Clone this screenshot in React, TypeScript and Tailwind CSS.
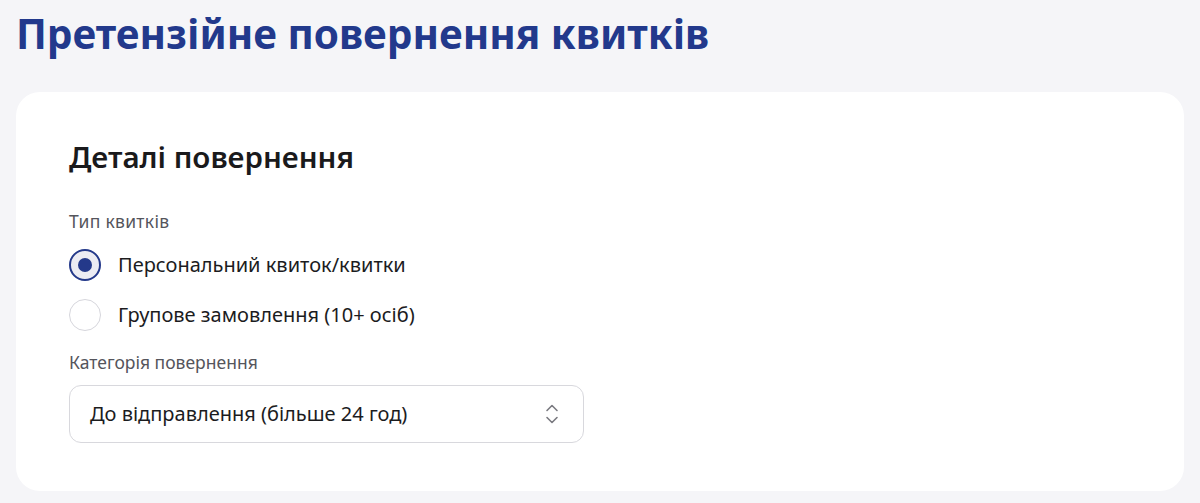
import React, { useState } from "react";

const font = { fontFamily: '"Noto Sans", "Open Sans", sans-serif' };

interface RadioOptionProps {
    label: string;
    checked: boolean;
    onSelect: () => void;
}

function RadioOption({ label, checked, onSelect }: RadioOptionProps) {
    return (
        <label className="flex items-center gap-[17px] cursor-pointer" onClick={onSelect}>
            {checked ? (
                <span className="flex h-8 w-8 items-center justify-center rounded-full border-2 border-[#24398a] bg-[#ececf3]">
                    <span className="h-[14px] w-[14px] rounded-full bg-[#24398a]" />
                </span>
            ) : (
                <span className="h-8 w-8 rounded-full border border-[#d6d6dc] bg-white" />
            )}
            <span className="text-[20px] leading-8 text-[#1c1c1e]">{label}</span>
        </label>
    );
}

export default function App() {
    const [ticketType, setTicketType] = useState("personal");

    return (
        <div className="min-h-[503px] bg-[#f5f5f8] px-4 pt-[6px]" style={font}>
            <h1 className="text-[40.5px] font-bold leading-[56px] text-[#22398c]">
                Претензійне повернення квитків
            </h1>

            <div className="mt-[30px] rounded-[24px] bg-white px-[53px] pt-[47px] pb-12">
                <h2 className="text-[29.5px] font-semibold leading-9 text-[#1a1a1c]">Деталі повернення</h2>

                {/* Ticket type */}
                <div className="mt-[34px] text-[17.5px] leading-6 tracking-[0.3px] text-[#55555c]">Тип квитків</div>
                <div className="mt-4 flex flex-col gap-[18px]">
                    <RadioOption
                        label="Персональний квиток/квитки"
                        checked={ticketType === "personal"}
                        onSelect={() => setTicketType("personal")}
                    />
                    <RadioOption
                        label="Групове замовлення (10+ осіб)"
                        checked={ticketType === "group"}
                        onSelect={() => setTicketType("group")}
                    />
                </div>

                {/* Return category */}
                <div className="mt-[19px] text-[17.5px] leading-6 text-[#55555c]">Категорія повернення</div>
                <div className="mt-[11px] flex h-[58px] w-[515px] items-center justify-between rounded-xl border border-[#d8d8dd] pl-5 pr-6">
                    <span className="text-[20px] text-[#1c1c1e]">До відправлення (більше 24 год)</span>
                    <svg width="14" height="22" viewBox="0 0 14 22" fill="none" stroke="#7a7a80" strokeWidth="1.6" strokeLinecap="round" strokeLinejoin="round">
                        <path d="M2 7.5 L7 2.5 L12 7.5" />
                        <path d="M2 14.5 L7 19.5 L12 14.5" />
                    </svg>
                </div>
            </div>
        </div>
    );
}
